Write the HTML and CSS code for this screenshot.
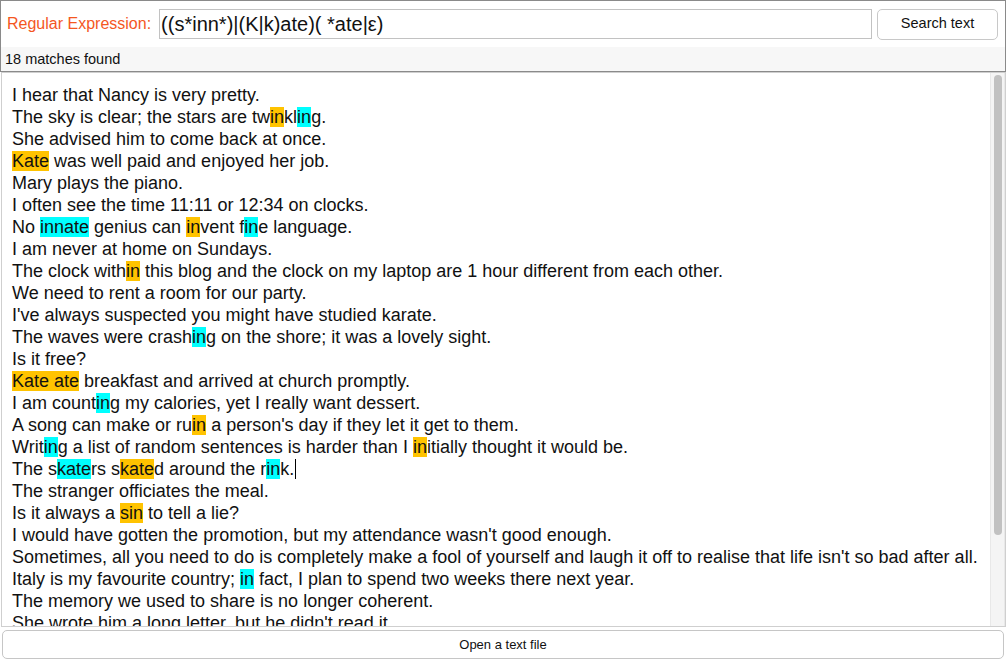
FILE: index.html
```html
<!DOCTYPE html>
<html>
<head>
<meta charset="utf-8">
<link rel="stylesheet" href="styles.css">
</head>
<body>
<div class="header">
  <div class="search-row">
    <label class="label" for="re">Regular Expression:</label>
    <input id="re" class="re-input" type="text" value="((s*inn*)|(K|k)ate)( *ate|ε)">
    <button class="search-btn">Search text</button>
  </div>
  <div class="status">18 matches found</div>
</div>
<div class="editor">
  <div class="text">
    <div class="line">I hear that Nancy is very pretty.</div>
    <div class="line">The sky is clear; the stars are tw<span class="m1">in</span>kl<span class="m2">in</span>g.</div>
    <div class="line">She advised him to come back at once.</div>
    <div class="line"><span class="m1">Kate</span> was well paid and enjoyed her job.</div>
    <div class="line">Mary plays the piano.</div>
    <div class="line">I often see the time 11:11 or 12:34 on clocks.</div>
    <div class="line">No <span class="m2">innate</span> genius can <span class="m1">in</span>vent f<span class="m2">in</span>e language.</div>
    <div class="line">I am never at home on Sundays.</div>
    <div class="line">The clock with<span class="m1">in</span> this blog and the clock on my laptop are 1 hour different from each other.</div>
    <div class="line">We need to rent a room for our party.</div>
    <div class="line">I've always suspected you might have studied karate.</div>
    <div class="line">The waves were crash<span class="m2">in</span>g on the shore; it was a lovely sight.</div>
    <div class="line">Is it free?</div>
    <div class="line"><span class="m1">Kate ate</span> breakfast and arrived at church promptly.</div>
    <div class="line">I am count<span class="m2">in</span>g my calories, yet I really want dessert.</div>
    <div class="line">A song can make or ru<span class="m1">in</span> a person's day if they let it get to them.</div>
    <div class="line">Writ<span class="m2">in</span>g a list of random sentences is harder than I <span class="m1">in</span>itially thought it would be.</div>
    <div class="line">The s<span class="m2">kate</span>rs s<span class="m1">kate</span>d around the r<span class="m2">in</span>k.<span class="caret"></span></div>
    <div class="line">The stranger officiates the meal.</div>
    <div class="line">Is it always a <span class="m1">sin</span> to tell a lie?</div>
    <div class="line">I would have gotten the promotion, but my attendance wasn't good enough.</div>
    <div class="line">Sometimes, all you need to do is completely make a fool of yourself and laugh it off to realise that life isn't so bad after all.</div>
    <div class="line">Italy is my favourite country; <span class="m2">in</span> fact, I plan to spend two weeks there next year.</div>
    <div class="line">The memory we used to share is no longer coherent.</div>
    <div class="line">She wrote him a long letter, but he didn't read it.</div>
    <div class="line">I really want to go to work, but I am too sick to drive.</div>
  </div>
  <div class="scrollbar"><div class="thumb"></div></div>
</div>
<button class="open-btn">Open a text file</button>
</body>
</html>
```
FILE: styles.css
```css
html, body {
  margin: 0;
  padding: 0;
}
body {
  width: 1006px;
  height: 662px;
  overflow: hidden;
  display: flex;
  flex-direction: column;
  background: #ffffff;
  font-family: "Liberation Sans", Arial, sans-serif;
  color: #111;
}
.header {
  box-sizing: border-box;
  height: 72px;
  border: 1px solid #8a8a8a;
  display: flex;
  flex-direction: column;
  flex: none;
}
.search-row {
  height: 46px;
  display: flex;
  align-items: center;
  padding: 0 7px 0 6px;
  background: #fff;
}
.label {
  font-size: 16px;
  color: #f4571f;
  margin-right: 8px;
  white-space: nowrap;
}
.re-input {
  flex: 1;
  box-sizing: border-box;
  height: 30px;
  border: 1px solid #c2c2c2;
  padding: 0 1px;
  margin: 0;
  font-family: "Liberation Sans", Arial, sans-serif;
  font-size: 20px;
  color: #111;
  outline: none;
}
.search-btn {
  box-sizing: border-box;
  width: 121px;
  height: 31px;
  margin-left: 5px;
  border: 1px solid #c8c8c8;
  border-radius: 5px;
  background: #fff;
  font-family: "Liberation Sans", Arial, sans-serif;
  font-size: 14.5px;
  color: #111;
  padding: 0 0 2px 0;
}
.status {
  flex: 1;
  background: #f7f7f7;
  font-size: 14.5px;
  line-height: 24px;
  padding-left: 4px;
}
.editor {
  box-sizing: border-box;
  height: 555px;
  margin-left: 1px;
  border: 1px solid #cfcfcf;
  display: flex;
  flex: none;
  overflow: hidden;
}
.text {
  flex: 1;
  overflow: hidden;
  padding: 11px 0 0 10px;
  font-size: 18px;
  line-height: 22px;
  white-space: nowrap;
}
.m1 {
  background: #ffc300;
}
.m2 {
  background: #00ffff;
}
.caret {
  display: inline-block;
  width: 1px;
  height: 20px;
  background: #000;
  vertical-align: -4px;
  margin-left: 1px;
}
.scrollbar {
  box-sizing: border-box;
  width: 15px;
  background: #f4f4f4;
  border-left: 1px solid #e8e8e8;
  border-right: 1px solid #e8e8e8;
  padding: 2px 2px 0 3px;
  flex: none;
}
.thumb {
  height: 460px;
  background: #c1c1c1;
  border-radius: 4px;
}
.open-btn {
  box-sizing: border-box;
  height: 29px;
  margin: 3px 2px 3px 2px;
  border: 1px solid #c6c6c6;
  border-radius: 5px;
  background: #fff;
  font-family: "Liberation Sans", Arial, sans-serif;
  font-size: 13px;
  color: #111;
  padding: 0 0 1px 0;
  flex: none;
}
```
